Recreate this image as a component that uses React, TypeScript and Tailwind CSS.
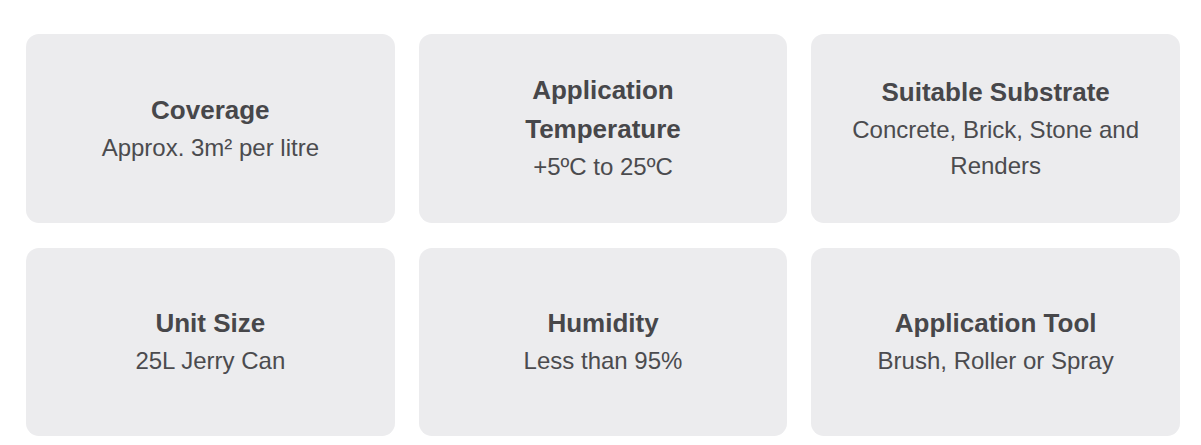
const specs = [
  { title: "Coverage", value: "Approx. 3m² per litre" },
  { title: "Application Temperature", value: "+5ºC to 25ºC" },
  { title: "Suitable Substrate", value: "Concrete, Brick, Stone and Renders" },
  { title: "Unit Size", value: "25L Jerry Can" },
  { title: "Humidity", value: "Less than 95%" },
  { title: "Application Tool", value: "Brush, Roller or Spray" },
];

const App = () => {
  return (
    <div className="min-h-[445px] bg-white pt-[34px] pl-[26px] font-['Liberation_Sans',Arial,sans-serif]">
      <div className="grid w-[1154px] grid-cols-3 gap-x-[24px] gap-y-[25px]">
        {specs.map((s) => (
          <div
            key={s.title}
            className="flex h-[188.5px] flex-col items-center justify-center rounded-[13px] bg-[#ececee] px-9 text-center"
          >
            <h3 className="text-[26px] font-bold leading-[39px] text-[#47474a]">{s.title}</h3>
            <p className="text-[24px] leading-[36px] text-[#4b4b4e]">{s.value}</p>
          </div>
        ))}
      </div>
    </div>
  );
};

export default App;
